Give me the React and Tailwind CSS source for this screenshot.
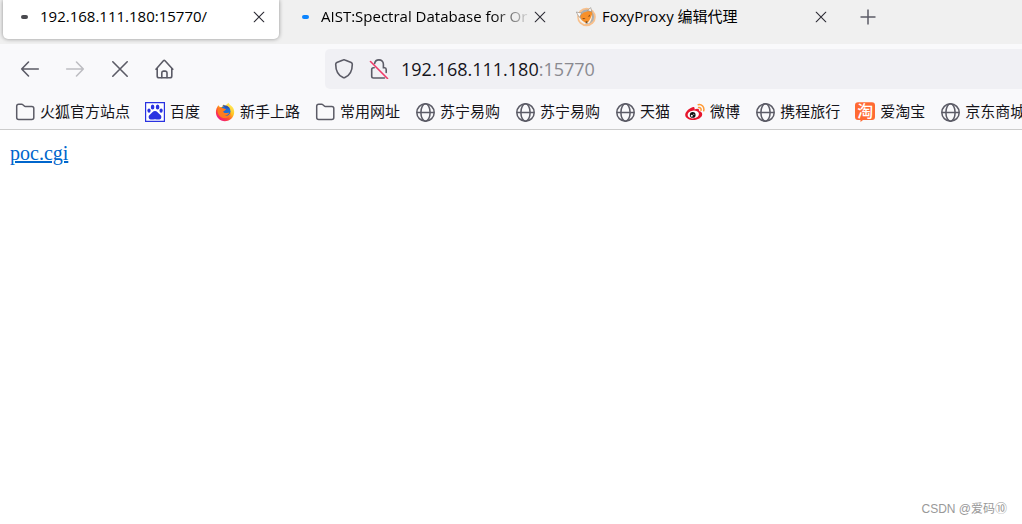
const ui = "font-['Open_Sans','Noto_Sans_CJK_SC',sans-serif]";

function CrossIcon({ className }) {
  return (
    <svg viewBox="0 0 20 20" className={className} fill="none" stroke="currentColor" strokeWidth="1.8" strokeLinecap="round">
      <path d="M2 2l16 16M18 2L2 18" />
    </svg>
  );
}

function ArrowIcon({ className }) {
  return (
    <svg viewBox="0 0 20 20" className={className} fill="none" stroke="currentColor" strokeWidth="1.6" strokeLinecap="round" strokeLinejoin="round">
      <path d="M18.3 10H1.7M8.5 3L1.7 10l6.8 7" />
    </svg>
  );
}

function HomeIcon() {
  return (
    <svg viewBox="0 0 20 20" className="size-5" fill="none" stroke="currentColor" strokeWidth="1.6" strokeLinecap="round" strokeLinejoin="round">
      <path d="M1 10.200L8.400 1.800q.8-.8 1.600 0l7.800 8.400M2.200 9.200v7.800q0 1.800 1.800 1.800h11q1.800 0 1.800-1.800V9.200" />
      <path d="M6.800 18.600v-4.800q0-1.700 1.600-1.700h2q1.600 0 1.600 1.700v4.800" />
    </svg>
  );
}

function ShieldIcon() {
  return (
    <svg viewBox="0 0 20 20" className="size-5 shrink-0" fill="none" stroke="currentColor" strokeWidth="1.6" strokeLinejoin="round">
      <path d="M9.100 1q.9-.4 1.800 0l6.300 2.500q1.100.5 1.100 1.700c0 6-2.400 11.100-7.400 13.400q-.9.4-1.800 0C4.100 16.300 1.700 11.200 1.700 5.200q0-1.200 1.100-1.700z" />
    </svg>
  );
}

function InsecureIcon() {
  return (
    <svg viewBox="0 0 20 20" className="size-5 shrink-0" fill="none" stroke="currentColor" strokeWidth="1.6" strokeLinecap="round">
      <path d="M5.600 4.500C6 2.300 7.500.9 9.900.9c2.700 0 4.500 1.900 4.500 4.300v3.600h1.300q1.500 0 1.500 1.700v3M5.200 8.800H4.500q-1.800 0-1.800 1.700v6.800q0 1.700 1.800 1.700h11" />
      <path d="M1.500 2.500l17 17" stroke="#f03a68" />
    </svg>
  );
}

function FolderIcon() {
  return (
    <svg viewBox="0 0 20 20" className="size-5" fill="none" stroke="#5b5b66" strokeWidth="1.5" strokeLinejoin="round">
      <path d="M1.700 4.200q0-2 2-2h3q.7 0 1.200.5l1.400 1.300q.4.400 1 .400h6.500q2 0 2 2v9q0 2-2 2H3.700q-2 0-2-2z" />
    </svg>
  );
}

function GlobeIcon() {
  return (
    <svg viewBox="0 0 20 20" className="size-5" fill="none" stroke="#5b5b66" strokeWidth="1.5">
      <circle cx="10.500" cy="10.500" r="8.700" />
      <ellipse cx="10.500" cy="10.500" rx="4.600" ry="8.700" />
      <path d="M1.800 10.500h17.400" />
    </svg>
  );
}

function BaiduIcon() {
  return (
    <svg viewBox="0 0 20 20" className="size-5">
      <path d="M.6.600h18.800v18.800H.6z" fill="#fff" stroke="#2932e1" strokeWidth="1.200" />
      <g fill="#2932e1">
        <ellipse cx="7.600" cy="5" rx="1.800" ry="2.500" />
        <ellipse cx="12.600" cy="5" rx="1.800" ry="2.500" />
        <ellipse cx="4" cy="8.600" rx="1.600" ry="2.200" />
        <ellipse cx="16.100" cy="8.600" rx="1.600" ry="2.200" />
        <path d="M10 9c2 0 2.800 1.800 4.400 3 1.600 1.200 2.300 2.200 1.800 3.900-.6 1.800-2.500 1.800-6.200 1.300-3.700.5-5.600.5-6.200-1.300-.5-1.700.2-2.700 1.800-3.900C7.200 10.800 8 9 10 9z" />
      </g>
    </svg>
  );
}

function FirefoxIcon() {
  return (
    <svg viewBox="0 0 20 20" className="size-5">
      <defs>
        <linearGradient id="flame" x1="0.9" y1="0.05" x2="0.2" y2="0.95">
          <stop offset="0" stopColor="#fff36b" />
          <stop offset="0.4" stopColor="#ffc421" />
          <stop offset="0.68" stopColor="#ff4f2a" />
          <stop offset="1" stopColor="#f0148c" />
        </linearGradient>
      </defs>
      <path d="M3.300 3.200l1.600 1.900 1.900-.2 2-2.700L10 4l3.500-3.300c.3 1.700 3.400 2.800 4.800 5.600 1 2 1.200 4.600.3 7-1.400 3.700-4.700 5.900-8.700 5.900-5 0-9-3.900-9-8.900 0-2.700.9-4.900 2.400-7.100z" fill="url(#flame)" />
      <circle cx="10.300" cy="9.300" r="5.200" fill="#1d6fd8" />
      <path d="M7.500 3.400c2.300-.8 6 .5 7.400 3l-3.900-.1z" fill="#2a4fb5" />
      <path d="M2.500 7.200c1.600-1.700 4-2 5.800-1l2.700 1c-.1 1.200-2.200 1.400-2.700 2.300-.3.800.9 1.600 2.700 1.600 1.500 0 2-.6 3.200-.2-.8 1.600-2.500 2.500-4.500 2.400 2.600 1.300 5.300-.3 6.100-3.600.3 3.800-2.300 6.400-6.100 6.400-4.300 0-7.500-3.600-7.200-8.900z" fill="#ff7b1f" />
    </svg>
  );
}

function WeiboIcon() {
  return (
    <svg viewBox="0 0 20 20" className="size-5">
      <path d="M7.500 5.200c1.800-.7 2.500.3 2 2.200 2.500-1 5.200-1 4.600 1.700 2 .5 3.200 1.600 3.100 3.400-.2 3.100-4.400 5.500-8.900 5.500C3.800 18 .2 15.900.2 12.700c0-2.800 4-6.600 7.300-7.500z" fill="#e6162d" />
      <ellipse cx="8.300" cy="12.500" rx="5.700" ry="3.900" fill="#fff" transform="rotate(-8 8.300 12.500)" />
      <circle cx="7.700" cy="12.900" r="2.900" fill="#111" />
      <circle cx="6.800" cy="13.800" r="1" fill="#fff" />
      <circle cx="8.800" cy="12.300" r=".5" fill="#fff" />
      <path d="M13.200 2.700c3.500-.7 6.500 2.300 5.500 6M13.600 5.600c1.700-.3 2.900 1 2.400 2.600" fill="none" stroke="#ff9933" strokeWidth="1.500" strokeLinecap="round" />
    </svg>
  );
}

function TaobaoIcon() {
  return (
    <span className="relative flex size-5 justify-center">
      <svg viewBox="0 0 20 20" className="absolute inset-0 size-5">
        <path d="M3 .2h14q3 0 3 3V15q0 3-3 3H8l-2.500 2v-2H3q-3 0-3-3V3.200q0-3 3-3z" fill="#ff6a33" />
      </svg>
      <span className="relative text-base font-medium leading-4 text-white">淘</span>
    </span>
  );
}

function FoxyProxyIcon() {
  return (
    <svg viewBox="0 0 20 20" className="size-5 shrink-0">
      <circle cx="10.500" cy="10" r="9.300" fill="#f8c08c" />
      <circle cx="10.800" cy="9.800" r="7.300" fill="#a9b0b5" />
      <path d="M4 8.200c2.500-2.400 6.500-4.500 11.800-4.300 1.200 3.900.6 8-1.600 11.200-1.500 1-3.500 1.200-5 .8C6 14.500 4.300 11.500 4 8.200z" fill="#f7902a" />
      <path d="M.3 5l5.400 1.200-2.300 4.300zM11.800 3.500L14.600.6l1.300 4.200z" fill="#fff" stroke="#8d857c" strokeWidth=".6" />
      <path d="M2.500 9.500l3.500 4 4 2.700-1.500 1C5 16 2.800 13.500 2.500 9.500zM15.800 7.500c.6 3.300-.5 6.500-2.800 9l-1.700-.4c2.200-2.400 3.700-5.300 4.500-8.600z" fill="#f7f1e9" />
      <path d="M6 11.200l3.500-.1-1.600 1.100zM11.800 9.500l2.200-1.900-.3 2z" fill="#7a4519" />
      <path d="M9.300 14.600l2.400-.1-1 1.500z" fill="#333" />
    </svg>
  );
}

const bookmarks = [
  { label: "火狐官方站点", Icon: FolderIcon },
  { label: "百度", Icon: BaiduIcon },
  { label: "新手上路", Icon: FirefoxIcon },
  { label: "常用网址", Icon: FolderIcon },
  { label: "苏宁易购", Icon: GlobeIcon },
  { label: "苏宁易购", Icon: GlobeIcon },
  { label: "天猫", Icon: GlobeIcon },
  { label: "微博", Icon: WeiboIcon },
  { label: "携程旅行", Icon: GlobeIcon },
  { label: "爱淘宝", Icon: TaobaoIcon },
  { label: "京东商城", Icon: GlobeIcon },
];

function Tab({ active, icon, title, fade }) {
  return (
    <div
      className={`flex h-full w-[276px] shrink-0 items-center rounded-b-[5px] pr-3 pb-1.5 pl-[11px] ${
        active ? "bg-white shadow-[0_0_4px_rgba(0,0,0,0.4)]" : ""
      }`}
    >
      <button role="tab" aria-selected={active} className="flex min-w-0 flex-1 items-center gap-1.5 text-left">
        <span className="flex size-5 shrink-0 items-center justify-center">{icon}</span>
        <span
          className={`min-w-0 flex-1 overflow-hidden whitespace-nowrap pb-0.5 text-[15px] leading-6 ${
            fade ? "[mask-image:linear-gradient(to_left,transparent,black_40px)]" : ""
          }`}
        >
          {title}
        </span>
      </button>
      <button aria-label="关闭标签页" className="flex size-4 shrink-0 items-center justify-center text-[#2b2a33]">
        <CrossIcon className="size-3" />
      </button>
    </div>
  );
}

export default function App() {
  return (
    <div className={`flex min-h-screen flex-col overflow-hidden bg-white text-[#15141a] ${ui}`}>
      {/* Tabs */}
      <div role="tablist" className="flex h-11 gap-[5px] bg-[#f0f0f0] pb-[5px] pl-[3px] text-black">
        <Tab active title="192.168.111.180:15770/" icon={<span className="h-1 w-[7px] rounded-full bg-[#4a4a4f]" />} />
        <Tab fade title="AIST:Spectral Database for Or" icon={<span className="h-1 w-[7px] rounded-full bg-[#0a84ff]" />} />
        <Tab title="FoxyProxy 编辑代理" icon={<FoxyProxyIcon />} />
        <button aria-label="新建标签页" className="ml-3 flex w-5 items-center justify-center pb-1.5 text-[#5b5b66]">
          <svg viewBox="0 0 16 16" className="size-4" fill="none" stroke="currentColor" strokeWidth="1.5">
            <path d="M8 .5v15M.5 8h15" />
          </svg>
        </button>
      </div>

      {/* Toolbar */}
      <div className="flex h-[50px] items-center bg-[#f9f9fb] pl-5 text-[#5b5b66]">
        <div className="flex w-[305px] shrink-0 gap-[25px]">
          <button aria-label="后退"><ArrowIcon className="size-5" /></button>
          <button aria-label="前进" disabled className="text-[#bdbdc2]"><ArrowIcon className="size-5 rotate-180" /></button>
          <button aria-label="停止" className="flex w-5 items-center justify-center"><CrossIcon className="size-[18px]" /></button>
          <button aria-label="主页"><HomeIcon /></button>
        </div>
        <div className="flex h-10 flex-1 items-center rounded-l-[5px] bg-[#f0f0f4] pl-[9px]">
          <div className="flex gap-[15px]">
            <ShieldIcon />
            <InsecureIcon />
          </div>
          <p className="ml-3 text-lg leading-7 text-[#15141a]">
            192.168.111.180<span className="text-[#8a8a90]">:15770</span>
          </p>
        </div>
      </div>

      {/* Bookmarks */}
      <nav className="flex h-9 gap-[15px] overflow-hidden border-b border-[#cccccc] bg-[#f9f9fb] pl-[15px] font-['Noto_Sans_CJK_SC',sans-serif]">
        {bookmarks.map(({ label, Icon }, i) => (
          <a key={i} href="#" className="flex h-9 shrink-0 items-center gap-[5px] text-[15px] leading-5 whitespace-nowrap">
            <Icon />
            <span className="pb-0.5">{label}</span>
          </a>
        ))}
      </nav>

      <main className="flex flex-1 flex-col justify-between">
        <a href="#" className="mt-[11px] ml-2.5 self-start font-['Liberation_Serif',serif] text-xl leading-6 text-[#0066cc] underline">
          poc.cgi
        </a>
        <p className="self-end pr-[15px] pb-[5px] font-['Liberation_Sans','Noto_Sans_CJK_SC',sans-serif] text-xs leading-5 text-[#999999]">
          CSDN @爱码⑩
        </p>
      </main>
    </div>
  );
}
